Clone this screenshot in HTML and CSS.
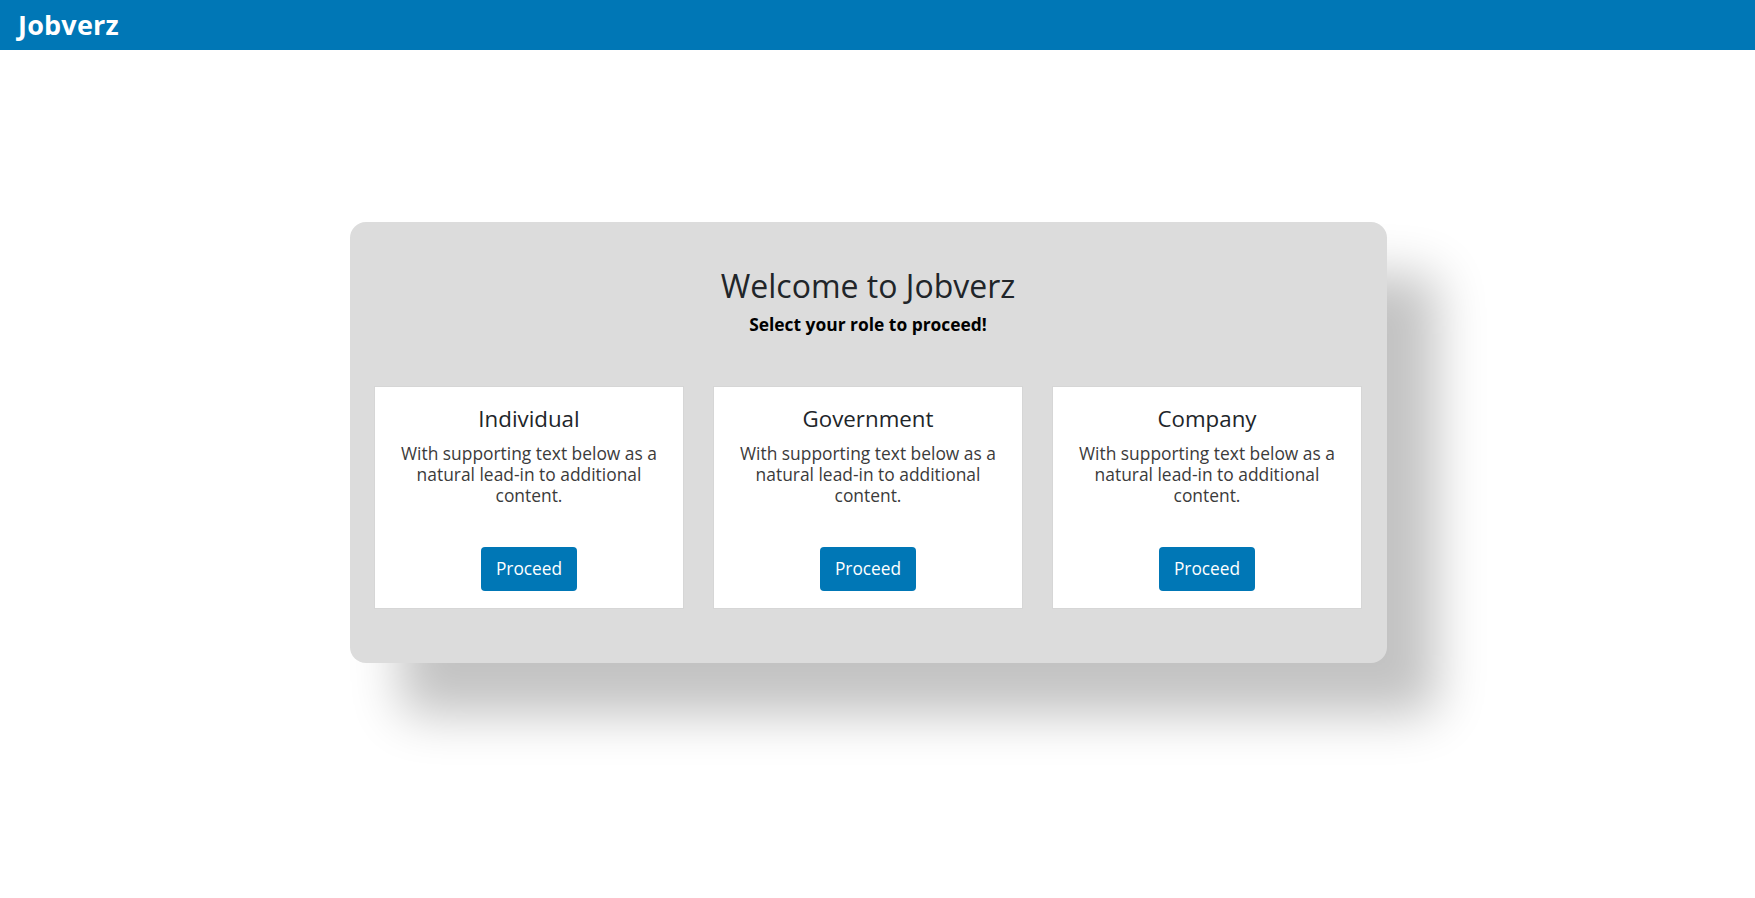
FILE: index.html
```html
<!DOCTYPE html>
<html lang="en">
<head>
<meta charset="utf-8">
<title>Jobverz</title>
<link rel="stylesheet" href="styles.css">
</head>
<body>
<nav class="navbar">
  <a class="brand" href="#">Jobverz</a>
</nav>
<main class="page">
  <section class="welcome">
    <h1 class="welcome-title">Welcome to Jobverz</h1>
    <p class="welcome-sub">Select your role to proceed!</p>
    <div class="roles">
      <div class="role-card">
        <h5 class="role-title">Individual</h5>
        <p class="role-text">With supporting text below as a natural lead-in to additional content.</p>
        <a class="btn" href="#">Proceed</a>
      </div>
      <div class="role-card">
        <h5 class="role-title">Government</h5>
        <p class="role-text">With supporting text below as a natural lead-in to additional content.</p>
        <a class="btn" href="#">Proceed</a>
      </div>
      <div class="role-card">
        <h5 class="role-title">Company</h5>
        <p class="role-text">With supporting text below as a natural lead-in to additional content.</p>
        <a class="btn" href="#">Proceed</a>
      </div>
    </div>
  </section>
</main>
</body>
</html>
```
FILE: styles.css
```css
* { box-sizing: border-box; }
html, body { margin: 0; padding: 0; }
body {
  font-family: "Open Sans", "Noto Sans", sans-serif;
  background: #ffffff;
  color: #212529;
  min-height: 100vh;
}
.navbar {
  height: 50px;
  background: #0077b6;
  padding-left: 18px;
  display: flex;
  align-items: center;
}
.brand {
  color: #ffffff;
  font-weight: 700;
  font-size: 27px;
  line-height: 50px;
  text-decoration: none;
  letter-spacing: 0.2px;
}
.page {
  padding-top: 172px;
  padding-left: 350px;
  padding-bottom: 200px;
}
.welcome {
  width: 1037px;
  background: #dcdcdc;
  border-radius: 16px;
  padding: 44px 25px 54px 24px;
  box-shadow: 50px 52px 50px rgba(0, 0, 0, 0.24);
  text-align: center;
}
.welcome-title {
  margin: 0;
  font-size: 32px;
  line-height: 40px;
  font-weight: 400;
  color: #212529;
}
.welcome-sub {
  margin: 6px 0 0;
  font-size: 17.4px;
  line-height: 24px;
  font-weight: 700;
  color: #000000;
}
.roles {
  margin-top: 50px;
  display: grid;
  grid-template-columns: repeat(3, 310px);
  column-gap: 29px;
}
.role-card {
  background: #ffffff;
  border: 1px solid #d6d6d6;
  padding: 18px 14px 17px;
  display: flex;
  flex-direction: column;
  align-items: center;
}
.role-title {
  margin: 0;
  font-size: 22.3px;
  line-height: 28px;
  font-weight: 500;
  color: #212529;
}
.role-text {
  margin: 10px 0 0;
  font-size: 17.4px;
  line-height: 21px;
  color: #3b3b3b;
}
.btn {
  margin-top: 41px;
  display: inline-block;
  background: #0077b6;
  color: #ffffff;
  text-decoration: none;
  font-size: 17.3px;
  line-height: 24px;
  padding: 10px 15px;
  border-radius: 4px;
}
```
